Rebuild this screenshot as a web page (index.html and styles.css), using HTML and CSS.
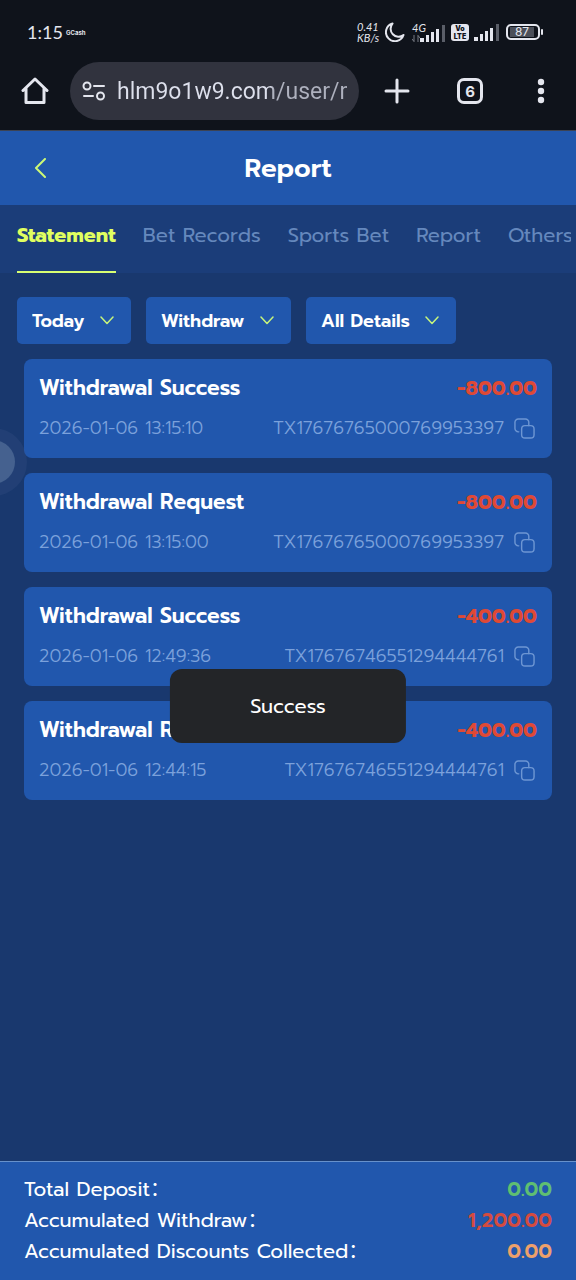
FILE: index.html
```html
<!DOCTYPE html>
<html lang="en">
<head>
<meta charset="utf-8">
<meta name="viewport" content="width=device-width, initial-scale=1">
<title>Report</title>
<link rel="stylesheet" href="styles.css">
</head>
<body>
<svg class="sprite" aria-hidden="true">
  <symbol id="chevron" viewBox="0 0 14 9"><path d="M1 1l6 6.500 6-6.500"/></symbol>
  <symbol id="copy" viewBox="0 0 22 22"><rect x="8" y="8" width="13" height="13" rx="3.500"/><path d="M5 14.500H4.500A3.500 3.500 0 0 1 1 11V4.500A3.500 3.500 0 0 1 4.500 1h7.500A3.500 3.500 0 0 1 15.500 4.500V8"/></symbol>
  <symbol id="signal" viewBox="0 0 26 17"><path d="M0 13h4v4H0zM6 10h3v7H6zM11 7h3v10h-3zM16 4h3v13h-3z"/><path class="weak" d="M22 0h3v17h-3z"/></symbol>
</svg>

<div class="chrome">
  <div class="status">
    <span class="time">1:15</span>
    <span class="carrier">GCash</span>
    <div class="status-icons">
      <span class="rate">0.41<br>KB/s</span>
      <svg class="moon" viewBox="0 0 20 20"><path d="M7.500 1.500A9 9 0 1 0 18.500 13A8 8 0 0 1 7.500 1.500z"/></svg>
      <span class="mobile">
        <span class="net"><span>4G</span><svg class="arrows" viewBox="0 0 8 7"><path d="M2 0v6M0 4l2 2.500M6 7V1M8 3L6 .5"/></svg></span>
        <svg class="signal"><use href="#signal"/></svg>
      </span>
      <span class="volte">Vo<br>LTE</span>
      <svg class="signal second"><use href="#signal"/></svg>
      <span class="battery"><span>87</span></span>
    </div>
  </div>
  <div class="toolbar">
    <button class="tool home" aria-label="Home"><svg viewBox="0 0 28 28"><path d="M2 13.500L14 2l12 11.500M5 11v14.500h18V11"/></svg></button>
    <label class="address">
      <svg viewBox="0 0 24 20"><circle cx="5" cy="5" r="3.500"/><path d="M12 5h10M2 15h9"/><circle cx="18.500" cy="15" r="3.500"/></svg>
      <input type="text" aria-label="Address" value="hlm9o1w9.com/user/report">
    </label>
    <button class="tool" aria-label="New tab"><svg viewBox="0 0 28 28"><path d="M14 3v22M3 14h22"/></svg></button>
    <button class="tool" aria-label="Open tabs"><span class="count">6</span></button>
    <button class="tool menu" aria-label="Menu"><svg viewBox="0 0 8 28"><circle cx="4" cy="5" r="3.200"/><circle cx="4" cy="14" r="3.200"/><circle cx="4" cy="23" r="3.200"/></svg></button>
  </div>
</div>

<header class="header">
  <button class="back" aria-label="Back"><svg viewBox="0 0 12 20"><path d="M11 1L2 10l9 9"/></svg></button>
  <h1>Report</h1>
</header>

<div class="tab-bar">
  <nav class="tabs">
    <a class="active" href="#statement">Statement</a>
    <a href="#bets">Bet Records</a>
    <a href="#sports">Sports Bet</a>
    <a href="#report">Report</a>
    <a href="#others">Others</a>
  </nav>
</div>

<main class="content">
  <div class="filters">
    <label class="filter"><select aria-label="Period"><option>Today</option></select><svg><use href="#chevron"/></svg></label>
    <label class="filter"><select aria-label="Type"><option>Withdraw</option></select><svg><use href="#chevron"/></svg></label>
    <label class="filter"><select aria-label="Details"><option>All Details</option></select><svg><use href="#chevron"/></svg></label>
  </div>
  <ul class="records">
    <li class="card">
      <div class="row"><strong>Withdrawal Success</strong><b class="amount">-800.00</b></div>
      <div class="row meta"><time>2026-01-06 13:15:10</time><span class="tx">TX17676765000769953397</span><button class="copy" aria-label="Copy"><svg viewBox="0 0 22 22"><use href="#copy"/></svg></button></div>
    </li>
    <li class="card">
      <div class="row"><strong>Withdrawal Request</strong><b class="amount">-800.00</b></div>
      <div class="row meta"><time>2026-01-06 13:15:00</time><span class="tx">TX17676765000769953397</span><button class="copy" aria-label="Copy"><svg viewBox="0 0 22 22"><use href="#copy"/></svg></button></div>
    </li>
    <li class="card">
      <div class="row"><strong>Withdrawal Success</strong><b class="amount">-400.00</b></div>
      <div class="row meta"><time>2026-01-06 12:49:36</time><span class="tx">TX17676746551294444761</span><button class="copy" aria-label="Copy"><svg viewBox="0 0 22 22"><use href="#copy"/></svg></button></div>
    </li>
    <li class="card">
      <div class="row"><strong>Withdrawal Request</strong><b class="amount">-400.00</b></div>
      <div class="row meta"><time>2026-01-06 12:44:15</time><span class="tx">TX17676746551294444761</span><button class="copy" aria-label="Copy"><svg viewBox="0 0 22 22"><use href="#copy"/></svg></button></div>
    </li>
  </ul>
</main>

<footer class="totals">
  <div class="row"><span>Total Deposit：</span><b class="green">0.00</b></div>
  <div class="row"><span>Accumulated Withdraw：</span><b class="red">1,200.00</b></div>
  <div class="row"><span>Accumulated Discounts Collected：</span><b class="orange">0.00</b></div>
</footer>

<button class="floater" aria-label="Assistive menu"></button>
<div class="toast" role="status">Success</div>
</body>
</html>
```
FILE: styles.css
```css
* { box-sizing: border-box; }
body {
  margin: 0;
  min-height: 100vh;
  display: flex;
  flex-direction: column;
  background: #19386e;
  color: #fff;
  font-family: Prompt, Inter, "Noto Sans CJK SC", sans-serif;
  overflow-x: hidden;
}
button { border: 0; padding: 0; background: none; color: inherit; font: inherit; }
svg { display: block; fill: none; stroke-linecap: round; stroke-linejoin: round; }
.sprite { position: absolute; width: 0; height: 0; }

.chrome { background: #0f131b; border-bottom: 1px solid #3c4354; color: #e4e6ee; }
.status { display: flex; align-items: center; height: 62px; padding: 2px 36px 0 27px; font-family: Lato, sans-serif; }
.time { width: 30px; font-size: 18px; white-space: nowrap; }
.carrier { margin-left: 9px; font: bold 6px Inter, sans-serif; }
.status-icons { display: flex; align-items: center; margin-left: auto; }
.rate { font-size: 11px; line-height: 11px; font-style: italic; width: 27px; }
.moon { width: 20px; height: 20px; margin: 0 7px 0 1px; stroke: #e4e6ee; stroke-width: 2; }
.mobile { display: flex; align-items: flex-end; margin-right: 1px; }
.net { display: flex; flex-direction: column; align-items: flex-start; width: 8px; height: 20px; font-size: 11px; line-height: 11px; font-style: italic; justify-content: space-between; }
.arrows { width: 8px; height: 7px; stroke: #777b84; stroke-width: 1; }
.signal { width: 26px; height: 17px; fill: #e4e6ee; }
.weak { fill: #5a5e68; }
.second { margin: 0 6px 0 5px; }
.volte { margin-left: 4px; width: 18px; height: 17px; padding-top: 1px; border-radius: 3px; background: #e4e6ee; color: #0f131b; text-align: center; font: 900 7px/8px Inter, sans-serif; }
.battery { display: flex; width: 34px; height: 16px; padding: 1px; border: 2px solid #e4e6ee; border-radius: 5px; position: relative; }
.battery span { flex: 0 0 24px; margin-left: 1px; background: #4b4f59; font: 12px/10px Inter, sans-serif; text-align: center; }
.battery::after { content: ""; position: absolute; right: -5px; top: 3px; width: 2px; height: 6px; border-radius: 1px; background: #e4e6ee; }

.toolbar { display: flex; align-items: center; height: 68px; padding: 0 31px 10px 21px; }
.tool { flex: none; display: grid; place-items: center; width: 28px; height: 28px; }
.tool svg { width: 28px; height: 28px; stroke: #e4e6ee; stroke-width: 3; }
.address { flex: 1; min-width: 0; display: flex; align-items: center; gap: 11px; height: 58px; margin: 0 24px 0 21px; padding: 0 11px 0 12px; border-radius: 29px; background: #31333e; }
.address svg { flex: none; width: 24px; height: 20px; stroke: #e4e6ee; stroke-width: 2; }
.address input {
  flex: 1; min-width: 0; height: 36px; padding: 0; border: 0; outline: 0;
  font: 23px Roboto, sans-serif;
  color: transparent;
  background: linear-gradient(90deg, #dde0ec 154px, #aeb1be 156px);
  -webkit-background-clip: text;
  background-clip: text;
}
.count { display: grid; place-items: center; width: 26px; height: 26px; border: 3px solid #e4e6ee; border-radius: 7px; font: bold 15px Inter, sans-serif; }
.tool + .tool { margin-left: 45px; }
.tool + .menu { width: 8px; margin-left: 53px; }
.menu svg { width: 8px; fill: #e4e6ee; stroke: none; }

.header { display: grid; grid-template-columns: 48px 1fr 48px; align-items: center; height: 74px; padding: 0 16px; background: #2157ad; }
.header h1 { margin: 0; text-align: center; font-size: 26px; font-weight: 600; }
.back { display: grid; place-items: center; height: 48px; }
.back svg { width: 12px; height: 20px; stroke: #ccf976; stroke-width: 2; }

.tab-bar { padding: 0 5px 0 17px; background: #1b3d79; }
.tabs { display: flex; gap: 27px; height: 68px; overflow: hidden; white-space: nowrap; }
.tabs a { flex: none; padding-top: 16px; color: #6588bd; font-size: 20px; line-height: 28px; text-decoration: none; }
.tabs .active { border-bottom: 2px solid #d8ff72; color: #e0ff60; font-weight: 700; }

.content { flex: 1; padding: 24px 17px; }
.filters { display: flex; gap: 15px; }
.filter { display: flex; align-items: center; gap: 15px; height: 47px; padding: 0 17px 0 15px; border-radius: 5px; background: #2157ad; }
.filter select { appearance: none; border: 0; padding: 0; outline: 0; background: none; color: #fff; font: 600 18px/26px Prompt, Inter, sans-serif; }
.filter svg { width: 14px; height: 9px; stroke: #c6f57c; stroke-width: 1.500; pointer-events: none; }
.records { display: grid; gap: 15px; margin: 15px 7px 0; padding: 0; list-style: none; }
.card { display: grid; gap: 13px; padding: 15px 15px 17px; border-radius: 8px; background: #2157ad; }
.row { display: flex; align-items: center; justify-content: space-between; }
.card strong, .amount { font-size: 20px; line-height: 28px; font-weight: 700; }
.card strong { font-size: 21px; font-weight: 600; }
.amount { color: #df4935; }
.meta { color: #7ba1db; font-size: 18px; line-height: 26px; font-weight: 300; }
.tx { margin-left: auto; }
.copy { margin: 0 2px 0 10px; }
.copy svg { width: 21px; height: 21px; stroke: #6d96d3; stroke-width: 1.500; }

.totals { padding: 12px 24px 13px; border-top: 1px solid #6791cb; background: #2157ad; font-size: 20px; line-height: 31px; }
.totals b { font-weight: 600; }
.green { color: #5fbe72; }
.red { color: #d44b40; }
.orange { color: #eda06b; }

.floater { position: fixed; left: -29px; top: 440px; width: 44px; height: 44px; border-radius: 50%; background: #45618f; box-shadow: 0 0 0 12px rgb(69 97 143 / 20%); }
.toast { position: fixed; left: 50%; top: 669px; transform: translateX(-50%); width: 41%; padding: 22px 0; border-radius: 12px; background: #232528; text-align: center; font-size: 20px; line-height: 30px; }
```
